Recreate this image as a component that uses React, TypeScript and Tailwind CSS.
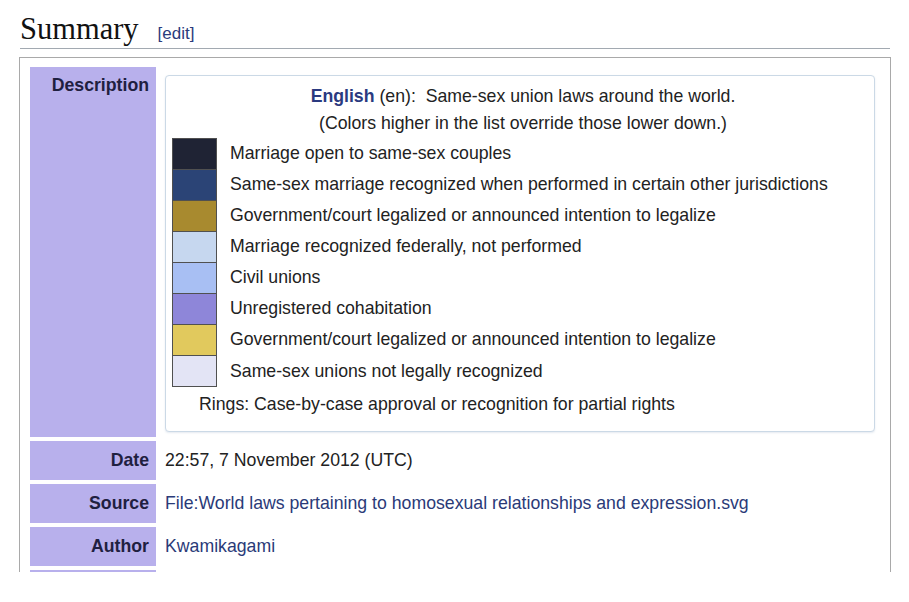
import React from 'react';

const legend: { color: string; label: string }[] = [
  { color: '#1f2334', label: 'Marriage open to same-sex couples' },
  { color: '#2b4476', label: 'Same-sex marriage recognized when performed in certain other jurisdictions' },
  { color: '#a88a2f', label: 'Government/court legalized or announced intention to legalize' },
  { color: '#c6d7ef', label: 'Marriage recognized federally, not performed' },
  { color: '#a8bff3', label: 'Civil unions' },
  { color: '#8e86d9', label: 'Unregistered cohabitation' },
  { color: '#e1c95d', label: 'Government/court legalized or announced intention to legalize' },
  { color: '#e3e4f5', label: 'Same-sex unions not legally recognized' },
];

const Label: React.FC<{ children: React.ReactNode; top?: boolean }> = ({ children, top }) => (
  <div
    className={`w-[126px] shrink-0 bg-[#b8b0ec] pr-[7px] text-right font-bold text-[#1f2040] ${
      top ? 'pt-[5px]' : 'flex items-center justify-end'
    }`}
  >
    {children}
  </div>
);

const App: React.FC = () => {
  return (
    <div
      className="w-[909px] h-[602px] overflow-hidden bg-white"
      style={{ fontFamily: '"Liberation Sans", Arial, sans-serif' }}
    >
      <div className="ml-[20px] w-[870px]">
        <h2 className="h-[49px] border-b border-[#a2a9b1] pt-[11px] leading-[36px] whitespace-nowrap">
          <span className="text-[30.5px] text-[#111]" style={{ fontFamily: '"Liberation Serif", "Times New Roman", serif' }}>
            Summary
          </span>
          <span className="ml-[19px] text-[17px] text-[#2a3b7c]">[edit]</span>
        </h2>
      </div>

      <div className="ml-[19px] mt-[8px] h-[515px] w-[872px] overflow-hidden border-x border-t border-[#a9a9a9] pl-[10px] pr-[10px] pt-[9px] text-[17.7px] leading-[27px] text-[#222]">
        <div className="flex flex-col gap-[4px]">
          {/* Description */}
          <div className="flex">
            <Label top>Description</Label>
            <div className="flex-1 pl-[9px] pr-[5px] pt-[8px] pb-[5px]">
              <div className="rounded-[4px] border border-[#cbd9e6] bg-white pt-[7px] pb-[13px] pl-[6px] shadow-[0_1px_2px_rgba(150,170,200,0.25)]">
                <div className="text-center">
                  <span className="font-bold text-[#2a3a80]">English</span> (en):&nbsp; Same-sex union laws around the world.
                </div>
                <div className="text-center">(Colors higher in the list override those lower down.)</div>
                <div className="mt-[1px] flex flex-col">
                  {legend.map((item, i) => (
                    <div key={i} className="flex items-center">
                      <div
                        className={`h-[31px] w-[45px] shrink-0 border-x border-t border-[#505050] ${
                          i === legend.length - 1 ? 'h-[32px] border-b' : ''
                        }`}
                        style={{ backgroundColor: item.color }}
                      />
                      <span className="ml-[13px]">{item.label}</span>
                    </div>
                  ))}
                </div>
                <div className="mt-[4px] pl-[27px]">Rings: Case-by-case approval or recognition for partial rights</div>
              </div>
            </div>
          </div>

          {/* Date */}
          <div className="flex h-[39px]">
            <Label>Date</Label>
            <div className="flex items-center pl-[9px]">22:57, 7 November 2012 (UTC)</div>
          </div>

          {/* Source */}
          <div className="flex h-[39px]">
            <Label>Source</Label>
            <div className="flex items-center pl-[9px] text-[#2a3a78]">
              File:World laws pertaining to homosexual relationships and expression.svg
            </div>
          </div>

          {/* Author */}
          <div className="flex h-[39px]">
            <Label>Author</Label>
            <div className="flex items-center pl-[9px] text-[#2a3a78]">Kwamikagami</div>
          </div>

          <div className="flex h-[39px]">
            <Label>{''}</Label>
            <div />
          </div>
        </div>
      </div>
    </div>
  );
};

export default App;
